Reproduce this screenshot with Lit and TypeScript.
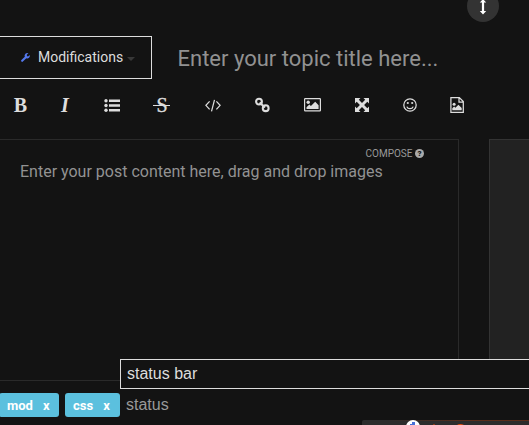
import { LitElement, html, css, svg } from "lit";
import { customElement } from "lit/decorators.js";

const icons = {
  list: svg`<circle cx="2" cy="2.8" r="1.7"/><circle cx="2" cy="7.5" r="1.7"/><circle cx="2" cy="12.2" r="1.7"/><path d="M5 1.5h11v2.5H5zM5 6.3h11v2.5H5zM5 11.1h11v2.5H5z"/>`,
  code: svg`<path class="line" d="M4.6 3.3.9 7.3l3.7 4M11.4 3.3l3.7 4-3.7 4M9.5 1.8l-3 11.5"/>`,
  link: svg`<g class="bold"><circle cx="4" cy="3.6" r="2.9"/><circle cx="10.7" cy="10.2" r="2.9"/><path d="m4.6 4.4 5.4 5.2"/></g>`,
  image: svg`<path fill-rule="evenodd" d="M1.2 0h14.6Q17 0 17 1.2v11.1q0 1.2-1.2 1.2H1.2Q0 13.5 0 12.3V1.2Q0 0 1.2 0zM1.2 1.2v11.1h14.6V1.2z"/><circle cx="4.2" cy="4.3" r="1.7"/><path d="M2.5 11.1V9.2l2.8-2.7 1.6 1.6L11.2 3.8l3.4 3.5v3.8z"/>`,
  expand: svg`<path d="M0 0h5.5L3.8 1.7 7 4.9l3.2-3.2L8.5 0H14v5.5l-1.7-1.7L9.1 7l3.2 3.2L14 8.5V14H8.5l1.7-1.7L7 9.1l-3.2 3.2L5.5 14H0V8.5l1.7 1.7L4.9 7 1.7 3.8 0 5.5z"/>`,
  smile: svg`<g class="line"><circle cx="7" cy="7" r="6.2"/><path d="M3.8 8.6c1 2.8 5.4 2.8 6.4 0"/></g><circle cx="4.8" cy="5" r="1.1"/><circle cx="9.2" cy="5" r="1.1"/>`,
  file: svg`<path class="line" d="M.9.6h8.4l4 4v10.7H.9zM9 .8V5h4.2"/><circle cx="4.1" cy="7.3" r="1.5"/><path d="M2.3 13.2v-2l1.8-1.7 1.3 1.3 3-3 3.3 3.2v2.2z"/>`,
};

@customElement("topic-composer")
export class TopicComposer extends LitElement {
  static styles = css`
    :host { display: flex; flex-direction: column; position: relative; width: 529px; height: 425px; overflow: hidden; background: #131313; color: #ddd; font: 14px Roboto, sans-serif; }
    * { box-sizing: border-box; }
    svg { display: block; fill: currentColor; overflow: visible; }
    .line { fill: none; stroke: currentColor; stroke-width: 1.25; }
    .bold { fill: none; stroke: currentColor; stroke-width: 2.1; }
    .top { height: 36px; flex: none; padding-left: 467px; }
    .resize { width: 32px; height: 32px; margin-top: -10px; border-radius: 50%; background: #333; color: #fff; padding: 9px 0 0 12px; }
    .heading { height: 43px; flex: none; display: flex; align-items: center; }
    .category { height: 43px; width: 152px; border: 1px solid #ddd; border-left: 0; display: flex; align-items: center; padding: 0 0 1px 21px; }
    .wrench { color: #5478ed; margin-right: 8px; }
    .caret { border: 4px solid transparent; border-top-color: #383838; border-bottom: 0; margin: 3px 0 0 4px; }
    .title { font-size: 22px; color: #919191; margin-left: 25.5px; padding-top: 1px; white-space: nowrap; }
    .tools { height: 60px; flex: none; display: flex; padding-bottom: 8px; margin-left: -4.5px; }
    .tool { display: flex; align-items: center; justify-content: center; }
    .tool:nth-child(1) { width: 50px; }
    .tool:nth-child(2) { width: 39px; }
    .tool:nth-child(3) { width: 55px; }
    .tool:nth-child(4) { width: 45px; }
    .tool:nth-child(5) { width: 56px; }
    .tool:nth-child(6) { width: 44px; }
    .tool:nth-child(7) { width: 56px; }
    .tool:nth-child(8) { width: 42px; }
    .tool:nth-child(9) { width: 54px; }
    .tool:nth-child(10) { width: 41px; }
    .serif { font: 20px "Liberation Serif", serif; }
    .b { font-weight: bold; }
    .i { font-style: italic; font-weight: bold; }
    .strike { position: relative; -webkit-text-stroke: 0.4px #ddd; }
    .strike::after { content: ""; position: absolute; left: -3px; right: -2px; top: 11px; height: 1px; background: #ddd; }
    .editor { height: 242px; flex: none; display: flex; gap: 30px; }
    .write { width: 459px; border: 1px solid #2a2a2a; border-left: 0; position: relative; padding: 22px 20px; font-size: 16px; line-height: 20px; color: #929292; white-space: nowrap; }
    .preview { flex: 1; background: #222; border: 1px solid #333; border-right: 0; }
    .compose { position: absolute; top: 8px; right: 34px; display: flex; align-items: center; gap: 2.5px; font-size: 10px; line-height: 12px; color: #999; }
    .help { width: 9px; height: 9px; border-radius: 50%; background: #aaa; color: #131313; font-size: 8px; line-height: 9px; font-weight: 900; text-align: center; margin-top: -1px; }
    .tags { flex: 1; display: flex; align-items: flex-start; padding-top: 12px; font: 16px "Liberation Sans", sans-serif; }
    .tag { height: 24px; background: #5bc0de; color: #fff; border-radius: 3px; font: bold 13px/25px Roboto, sans-serif; padding: 0 10px 0 8px; margin-right: 6px; display: flex; gap: 10px; }
    .tag.mod { width: 60px; margin-left: -1px; }
    .tag.css { width: 55px; }
    .entry { color: #999; line-height: 23px; }
    .suggestion { position: absolute; left: 120px; top: 359px; width: 420px; height: 30px; background: #131313; border: 1px solid #ddd; padding-left: 6px; font: 16px/27px "Liberation Sans", sans-serif; }
    .strip { position: absolute; left: 362px; right: 0; top: 420px; height: 5px; overflow: hidden; border-radius: 2px 0 0; background: linear-gradient(90deg, transparent 15%, #5a2d1a 65%) 0 0 / 100% 1px no-repeat #2c2c2c; }
    .strip svg { margin-left: 44px; }
  `;

  private tool(name: keyof typeof icons, w: number, h: number) {
    return html`<span class="tool"><svg width=${w} height=${h} viewBox="0 0 ${w} ${h}">${icons[name]}</svg></span>`;
  }

  render() {
    return html`
      <div class="top"><div class="resize"><svg width="8" height="16" viewBox="0 0 8 16"><path d="M4 0 7.2 3.6H5.1v8.3h2.1L4 15.5.8 11.9h2.1V3.6H.8z"/></svg></div></div>
      <div class="heading">
        <div class="category">
          <svg class="wrench" width="9" height="9" viewBox="0 0 9 9"><path d="M8.8 2.1a2.6 2.6 0 0 1-3.5 3.1L1.9 8.6A1 1 0 0 1 .4 7.1l3.4-3.4A2.6 2.6 0 0 1 7.5.4L5.9 1.5v1.4l1.1.6z"/></svg>
          <span>Modifications</span><span class="caret"></span>
        </div>
        <div class="title">Enter your topic title here...</div>
      </div>
      <div class="tools">
        <span class="tool serif b">B</span><span class="tool serif i">I</span>
        ${this.tool("list", 16, 15)}
        <span class="tool serif"><span class="strike">S</span></span>
        ${this.tool("code", 16, 15)}${this.tool("link", 15, 15)}
        ${this.tool("image", 17, 14)}${this.tool("expand", 14, 14)}
        ${this.tool("smile", 14, 14)}${this.tool("file", 14, 16)}
      </div>
      <div class="editor">
        <div class="write">Enter your post content here, drag and drop images
          <div class="compose"><span>COMPOSE</span><span class="help">?</span></div>
        </div>
        <div class="preview"></div>
      </div>
      <div class="tags">
        <span class="tag mod"><span>mod</span><span>x</span></span>
        <span class="tag css"><span>css</span><span>x</span></span>
        <span class="entry">status</span>
      </div>
      <div class="suggestion">status bar</div>
      <div class="strip"><svg width="80" height="5" viewBox="0 0 80 5"><circle cx="7" cy="7" r="7" fill="#fff"/><path fill="#4770d8" d="M6 2h3v3H4V4h2z"/><path fill="#8a3a16" d="M27 4h2v1h-2z"/><path fill="#e64b0c" d="M51 5q3-2 7 0z"/></svg></div>
    `;
  }
}

@customElement("app-root")
export class AppRoot extends LitElement {
  static styles = css`:host { display: block; }`;
  render() {
    return html`<topic-composer></topic-composer>`;
  }
}
